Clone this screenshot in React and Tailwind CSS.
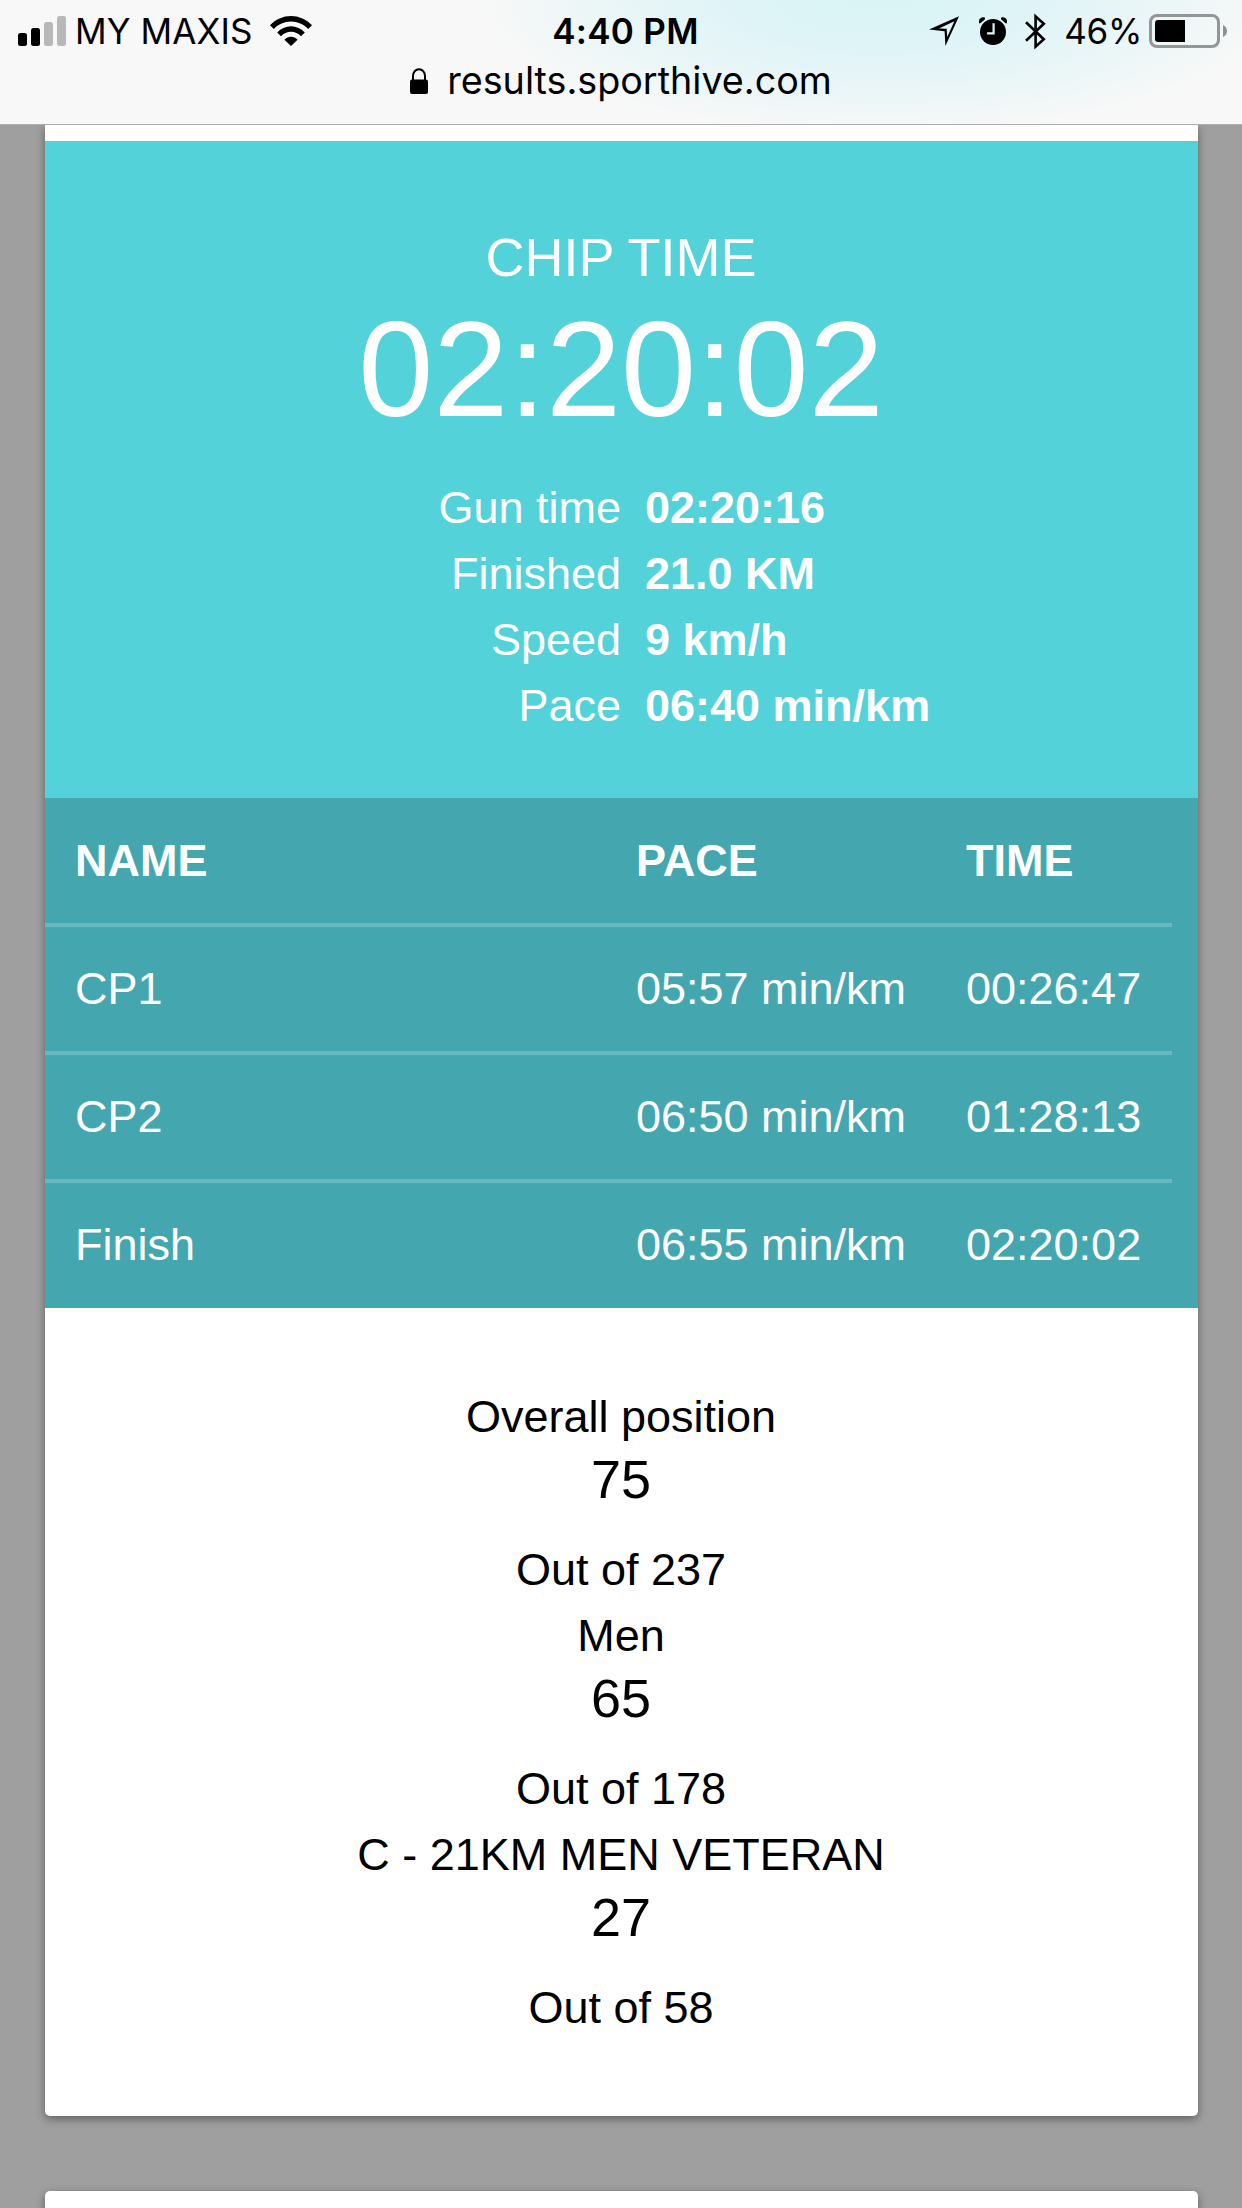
import { clsx } from 'clsx';

const STATS = [
  { label: 'Gun time', value: '02:20:16' },
  { label: 'Finished', value: '21.0 KM' },
  { label: 'Speed', value: '9 km/h' },
  { label: 'Pace', value: '06:40 min/km' },
];

const SPLITS = [
  { name: 'CP1', pace: '05:57 min/km', time: '00:26:47' },
  { name: 'CP2', pace: '06:50 min/km', time: '01:28:13' },
  { name: 'Finish', pace: '06:55 min/km', time: '02:20:02' },
];

const RANKINGS = [
  { label: 'Overall position', position: 75, total: 237 },
  { label: 'Men', position: 65, total: 178 },
  { label: 'C - 21KM MEN VETERAN', position: 27, total: 58 },
];

function SignalIcon() {
  return (
    <svg width="48" height="30" viewBox="0 0 48 30" className="shrink-0">
      <rect x="0" y="17" width="9" height="13" rx="2.5" />
      <rect x="13" y="12" width="9" height="18" rx="2.5" />
      <rect x="26" y="6" width="9" height="24" rx="2.5" fill="#b8b8b8" />
      <rect x="39" y="0" width="9" height="30" rx="2.5" fill="#b8b8b8" />
    </svg>
  );
}

function WifiIcon() {
  return (
    <svg width="42" height="30" viewBox="0 0 42 30" className="shrink-0">
      <path d="M0 9.2C5.6 3.4 13 0 21 0s15.400 3.400 21 9.200l-3.800 3.700C33.600 8.200 27.600 5.400 21 5.400S8.400 8.200 3.800 12.900z" />
      <path d="M7.200 16.400C10.900 12.600 15.700 10.300 21 10.300s10.100 2.300 13.800 6.100L31 20.200c-2.700-2.800-6.100-4.500-10-4.500s-7.300 1.700-10 4.500z" />
      <path d="M14.400 23.700c1.800-1.900 4.100-3 6.600-3s4.800 1.100 6.600 3L21 30z" />
    </svg>
  );
}

function LocationIcon() {
  return (
    <svg width="30" height="30" viewBox="0 0 30 30" className="shrink-0">
      <path fillRule="evenodd" d="M0 13.600 30 .3 16.400 30 15.600 15.200zM10 12.400 17.700 12.700 18.200 21 25.400 5.200z" />
    </svg>
  );
}

function AlarmIcon() {
  return (
    <svg width="28" height="28" viewBox="0 0 28 28" className="shrink-0">
      <circle cx="14" cy="15" r="13" />
      <path d="M0 6.200A4.600 4.600 0 0 1 5.800.5L6 2.200 1.400 6.300zM28 6.200A4.600 4.600 0 0 0 22.200.5L22 2.200l4.600 4.100z" />
      <path d="M14.600 6.200v10.200H8.100" fill="none" stroke="#dff4f6" strokeWidth="2.200" />
    </svg>
  );
}

function BluetoothIcon() {
  return (
    <svg width="21" height="37" viewBox="0 0 21 37" className="shrink-0">
      <path d="M1 9.200 18.800 26.200 10.600 33.600V3.400l8.200 7.400L1 27.800" fill="none" stroke="#000" strokeWidth="2.600" strokeMiterlimit="8" />
    </svg>
  );
}

function BatteryIcon() {
  return (
    <svg width="78" height="34" viewBox="0 0 78 34" className="shrink-0">
      <rect x="1.500" y="1.500" width="68" height="31" rx="6.500" fill="none" stroke="#949696" strokeWidth="3" />
      <path d="M9 6h27v22H9a3 3 0 0 1-3-3V9a3 3 0 0 1 3-3z" />
      <path d="M74 11c2.400.9 4 3.200 4 6s-1.600 5.100-4 6z" fill="#8f9191" />
    </svg>
  );
}

function LockIcon() {
  return (
    <svg width="18" height="26" viewBox="0 0 18 26" className="shrink-0">
      <path d="M3 13V8a6 6.800 0 0 1 12 0v5" fill="none" stroke="#000" strokeWidth="2" />
      <rect y="11.500" width="18" height="14.500" rx="2" />
    </svg>
  );
}

/**
 * BrowserBar - phone status line with the site address under it
 */
function BrowserBar() {
  return (
    <header className="relative z-10 h-[125px] border-b border-[#adadad] bg-[#f8f8f8] bg-[radial-gradient(ellipse_400px_135px_at_880px_0px,#d9f4f5_0%,#dff4f7_35%,#ebf6f7_70%,#f8f8f800_100%)] font-['Inter',sans-serif] text-black">
      <div className="grid h-[62px] grid-cols-[1fr_auto_1fr] items-center pr-[15px] pl-[18px]">
        <div className="flex items-center">
          <SignalIcon />
          <span className="ml-[9px] text-[35px] leading-[36px] tracking-[0.1px]">MY MAXIS</span>
          <span className="ml-[17px]">
            <WifiIcon />
          </span>
        </div>
        <span className="pl-[6px] text-[35px] leading-[36px] font-semibold tracking-[0.3px]">4:40 PM</span>
        <div className="flex items-center justify-end">
          <LocationIcon />
          <span className="ml-[20px]">
            <AlarmIcon />
          </span>
          <span className="ml-[18px]">
            <BluetoothIcon />
          </span>
          <span className="ml-[18px] text-[35px] leading-[36px] tracking-[-0.3px]">46%</span>
          <span className="ml-[7px]">
            <BatteryIcon />
          </span>
        </div>
      </div>
      <div className="flex h-[38px] items-center justify-center">
        <LockIcon />
        <span className="-mt-[2px] ml-[19px] text-[37.7px] leading-[38px]">results.sporthive.com</span>
      </div>
    </header>
  );
}

function ChipTime() {
  return (
    <section className="h-[657px] bg-[#53d2da] pt-[83px] pr-px text-center text-white">
      <h2 className="text-[54px] leading-[66px]">CHIP TIME</h2>
      <p className="pt-[5px] text-[135px] leading-[150px]">02:20:02</p>
      <dl className="mt-[30px] text-[45px] leading-[66px]">
        {STATS.map(({ label, value }) => (
          <div key={label} className="grid grid-cols-2">
            <dt className="text-right">{label}</dt>
            <dd className="pl-6 text-left font-bold">{value}</dd>
          </div>
        ))}
      </dl>
    </section>
  );
}

function SplitRow({ cells, head = false }) {
  const [name, pace, time] = cells;
  return (
    <div
      className={clsx(
        'grid w-[1127px] grid-cols-[561px_330px_1fr] items-center border-b-4 border-[#69b8bf] pl-[30px] text-[45px] leading-[66px] last:h-[124px] last:border-b-0',
        head ? 'h-[129px] pt-px font-bold' : 'h-[128px]',
      )}
    >
      <span>{name}</span>
      <span>{pace}</span>
      <span>{time}</span>
    </div>
  );
}

function Splits() {
  return (
    <section className="h-[510px] bg-[#44a7b0] text-white">
      <SplitRow head cells={['NAME', 'PACE', 'TIME']} />
      {SPLITS.map(({ name, pace, time }) => (
        <SplitRow key={name} cells={[name, pace, time]} />
      ))}
    </section>
  );
}

function Rankings() {
  return (
    <section className="h-[808px] pt-[76px] pr-px text-center text-[45px] leading-[66px] text-black">
      {RANKINGS.map(({ label, position, total }) => (
        <div key={label}>
          <p>{label}</p>
          <p className="mb-[28px] text-[54px] leading-[59px]">{position}</p>
          <p>Out of {total}</p>
        </div>
      ))}
    </section>
  );
}

function App() {
  return (
    <div className="h-[2208px] overflow-hidden bg-[#9f9f9f] font-['Liberation_Sans',Arial,sans-serif]">
      <BrowserBar />
      <main className="mr-[44px] ml-[45px]">
        <article className="overflow-hidden rounded-b-[5px] bg-white pt-4 shadow-[0_3px_10px_rgba(0,0,0,0.4)]">
          <ChipTime />
          <Splits />
          <Rankings />
        </article>
        <div className="mt-[75px] h-[60px] rounded-t-[5px] bg-white shadow-[0_3px_10px_rgba(0,0,0,0.4)]" />
      </main>
    </div>
  );
}

export default App;
